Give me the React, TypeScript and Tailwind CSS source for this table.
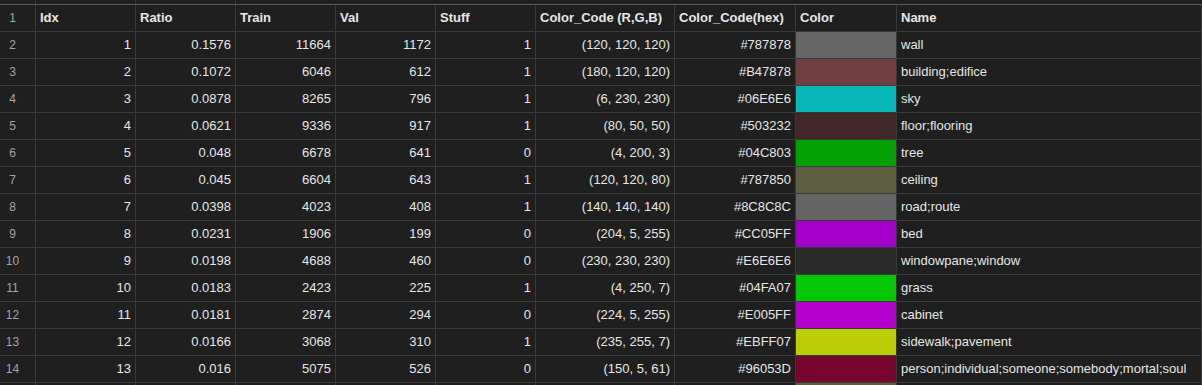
const rows = [
  { idx: 1, ratio: '0.1576', train: 11664, val: 1172, stuff: 1, rgb: '(120, 120, 120)', hex: '#787878', swatch: 'bg-[#666666]', name: 'wall' },
  { idx: 2, ratio: '0.1072', train: 6046, val: 612, stuff: 1, rgb: '(180, 120, 120)', hex: '#B47878', swatch: 'bg-[#704040]', name: 'building;edifice' },
  { idx: 3, ratio: '0.0878', train: 8265, val: 796, stuff: 1, rgb: '(6, 230, 230)', hex: '#06E6E6', swatch: 'bg-[#08b8b8]', name: 'sky' },
  { idx: 4, ratio: '0.0621', train: 9336, val: 917, stuff: 1, rgb: '(80, 50, 50)', hex: '#503232', swatch: 'bg-[#402828]', name: 'floor;flooring' },
  { idx: 5, ratio: '0.048', train: 6678, val: 641, stuff: 0, rgb: '(4, 200, 3)', hex: '#04C803', swatch: 'bg-[#04a003]', name: 'tree' },
  { idx: 6, ratio: '0.045', train: 6604, val: 643, stuff: 1, rgb: '(120, 120, 80)', hex: '#787850', swatch: 'bg-[#5e5e40]', name: 'ceiling' },
  { idx: 7, ratio: '0.0398', train: 4023, val: 408, stuff: 1, rgb: '(140, 140, 140)', hex: '#8C8C8C', swatch: 'bg-[#646464]', name: 'road;route' },
  { idx: 8, ratio: '0.0231', train: 1906, val: 199, stuff: 0, rgb: '(204, 5, 255)', hex: '#CC05FF', swatch: 'bg-[#a300cc]', name: 'bed' },
  { idx: 9, ratio: '0.0198', train: 4688, val: 460, stuff: 0, rgb: '(230, 230, 230)', hex: '#E6E6E6', swatch: 'bg-[#2a2a2a]', name: 'windowpane;window' },
  { idx: 10, ratio: '0.0183', train: 2423, val: 225, stuff: 1, rgb: '(4, 250, 7)', hex: '#04FA07', swatch: 'bg-[#04c806]', name: 'grass' },
  { idx: 11, ratio: '0.0181', train: 2874, val: 294, stuff: 0, rgb: '(224, 5, 255)', hex: '#E005FF', swatch: 'bg-[#b300cc]', name: 'cabinet' },
  { idx: 12, ratio: '0.0166', train: 3068, val: 310, stuff: 1, rgb: '(235, 255, 7)', hex: '#EBFF07', swatch: 'bg-[#bccc06]', name: 'sidewalk;pavement' },
  { idx: 13, ratio: '0.016', train: 5075, val: 526, stuff: 0, rgb: '(150, 5, 61)', hex: '#96053D', swatch: 'bg-[#780430]', name: 'person;individual;someone;somebody;mortal;soul' },
]

const headers = ['Idx', 'Ratio', 'Train', 'Val', 'Stuff', 'Color_Code (R,G,B)', 'Color_Code(hex)', 'Color', 'Name']

const grid = 'grid grid-cols-[36px_100px_100px_100px_100px_100px_139px_121px_101px_1fr]'
const cell = 'h-[27px] border-r border-b border-[#3a3a3a] flex items-center px-[4px] whitespace-nowrap overflow-hidden'
const num = `${cell} justify-end`
const rowNum = 'h-[27px] border-r border-b border-[#3a3a3a] flex items-center justify-center pr-[10px] text-[12px] text-[#a3a3a3]'

export default function App() {
  return (
    <div
      className="w-[1202px] h-[385px] overflow-hidden bg-[#1f1f1f] text-[13px] text-[#e6e6e6]"
      style={{ fontFamily: '"Liberation Sans", Arial, sans-serif' }}
    >
      {/* strip left over from the column letters */}
      <div className="h-[4px] flex">
        <div className="w-[36px] border-r border-[#3a3a3a]" />
        <div className="w-[100px] border-r border-[#3a3a3a]" />
        <div className="w-[100px] border-r border-[#3a3a3a]" />
      </div>

      <div className={`${grid} border-t border-[#5a5a5a]`}>
        <div className={rowNum}>1</div>
        {headers.map((h) => (
          <div key={h} className={`${cell} font-bold`}>
            {h}
          </div>
        ))}

        {rows.map((r, i) => (
          <div key={r.idx} className="contents">
            <div className={rowNum}>{i + 2}</div>
            <div className={num}>{r.idx}</div>
            <div className={num}>{r.ratio}</div>
            <div className={num}>{r.train}</div>
            <div className={num}>{r.val}</div>
            <div className={num}>{r.stuff}</div>
            <div className={num}>{r.rgb}</div>
            <div className={num}>{r.hex}</div>
            <div className={`${cell} ${r.swatch}`} />
            <div className={cell}>{r.name}</div>
          </div>
        ))}

        {/* next row, only its top edge shows */}
        <div className={rowNum} />
        <div className={cell} />
        <div className={cell} />
        <div className={cell} />
        <div className={cell} />
        <div className={cell} />
        <div className={cell} />
        <div className={cell} />
        <div className={`${cell} bg-[#606040]`} />
        <div className={cell} />
      </div>
    </div>
  )
}
